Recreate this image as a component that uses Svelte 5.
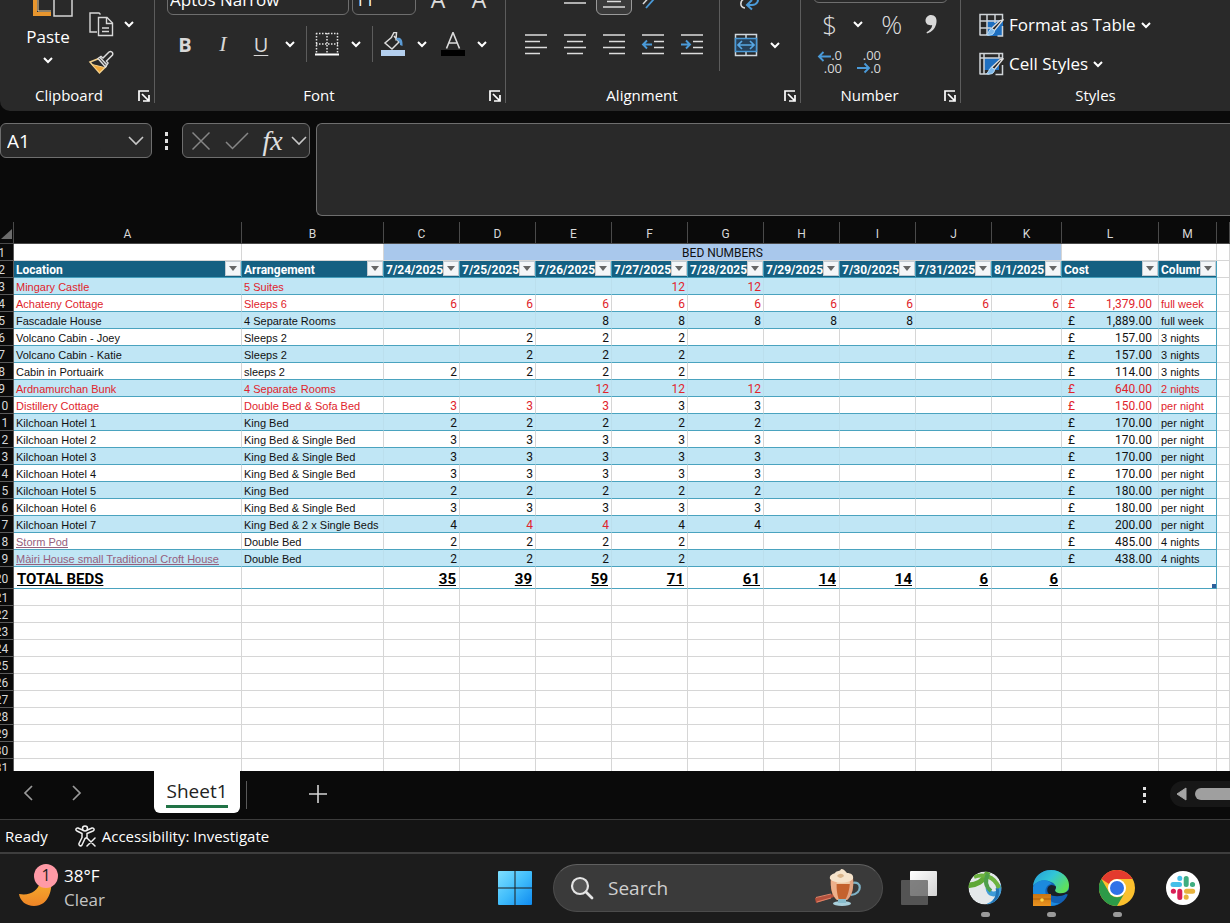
<script>
  const cols = ['A', 'B', 'C', 'D', 'E', 'F', 'G', 'H', 'I', 'J', 'K', 'L', 'M', ''];
  const headers = ['Location', 'Arrangement', '7/24/2025', '7/25/2025', '7/26/2025', '7/27/2025', '7/28/2025', '7/29/2025', '7/30/2025', '7/31/2025', '8/1/2025', 'Cost', 'Column1'];

  // beds: nine nightly values, C to K; reds: positions in beds drawn in red
  const row = (name, arr, beds, cost, per, opt = {}) => ({
    name, arr, cost, per, ...opt,
    beds: Array.from({ length: 9 }, (_, i) => beds[i] ?? ''),
    reds: opt.reds ?? (opt.red ? [0, 1, 2, 3, 4, 5, 6, 7, 8] : [])
  });
  const n = (v, count, skip = 0) => [...Array(skip).fill(''), ...Array(count).fill(v)];

  const rows = [
    row('Mingary Castle', '5 Suites', n(12, 2, 3), '', '', { red: true }),
    row('Achateny Cottage', 'Sleeps 6', n(6, 9), '1,379.00', 'full week', { red: true }),
    row('Fascadale House', '4 Separate Rooms', n(8, 5, 2), '1,889.00', 'full week'),
    row('Volcano Cabin - Joey', 'Sleeps 2', n(2, 3, 1), '157.00', '3 nights'),
    row('Volcano Cabin - Katie', 'Sleeps 2', n(2, 3, 1), '157.00', '3 nights'),
    row('Cabin in Portuairk', 'sleeps 2', n(2, 4), '114.00', '3 nights'),
    row('Ardnamurchan Bunk', '4 Separate Rooms', n(12, 3, 2), '640.00', '2 nights', { red: true }),
    row('Distillery Cottage', 'Double Bed & Sofa Bed', n(3, 5), '150.00', 'per night', { red: true, reds: [0, 1, 2] }),
    row('Kilchoan Hotel 1', 'King Bed', n(2, 5), '170.00', 'per night'),
    row('Kilchoan Hotel 2', 'King Bed & Single Bed', n(3, 5), '170.00', 'per night'),
    row('Kilchoan Hotel 3', 'King Bed & Single Bed', n(3, 5), '170.00', 'per night'),
    row('Kilchoan Hotel 4', 'King Bed & Single Bed', n(3, 5), '170.00', 'per night'),
    row('Kilchoan Hotel 5', 'King Bed', n(2, 5), '180.00', 'per night'),
    row('Kilchoan Hotel 6', 'King Bed & Single Bed', n(3, 5), '180.00', 'per night'),
    row('Kilchoan Hotel 7', 'King Bed & 2 x Single Beds', n(4, 5), '200.00', 'per night', { reds: [1, 2] }),
    row('Storm Pod', 'Double Bed', n(2, 4), '485.00', '4 nights', { link: true }),
    row('Màiri House small Traditional Croft House', 'Double Bed', n(2, 4), '438.00', '4 nights', { link: true })
  ];
  const totals = [35, 39, 59, 71, 61, 14, 14, 6, 6];
  const emptyRows = Array.from({ length: 11 }, (_, i) => i + 21);
</script>

{#snippet chev()}
  <svg width="10" height="8" viewBox="0 0 10 8" aria-hidden="true"><path d="M1 2l4 4 4-4" fill="none" stroke="#fff" stroke-width="2" /></svg>
{/snippet}

{#snippet bigChev()}
  <svg width="16" height="10" viewBox="0 0 16 10" aria-hidden="true"><path d="M1 1l7 7 7-7" fill="none" stroke="#c8c8c8" stroke-width="1.6" /></svg>
{/snippet}

{#snippet launcher(label)}
  <button class="launcher" aria-label={label}>
    <svg width="12" height="12" viewBox="0 0 12 12"><path d="M1 11V1h10M5 11h6V5M4 4l6 6" fill="none" stroke="#fff" stroke-width="1.7" /></svg>
  </button>
{/snippet}

{#snippet lines(d)}
  <svg width="24" height="24" viewBox="0 0 24 24" aria-hidden="true"><path {d} fill="none" stroke="#dcdcdc" stroke-width="1.6" /></svg>
{/snippet}

{#snippet brush()}
  <path d="M25 8l-8.500 10.500-3-2L22 8.500z" fill="#292929" stroke="#e0e0e0" stroke-width="1.300" />
  <path d="M13.500 16.500l3 2c0 4-4 5.500-8 4 2.500-1 2-5 5-6z" fill="#7db8ea" stroke="#b9dcf7" />
{/snippet}

<div class="app">
  <header class="ribbon">
    <section class="group clipboard">
      <div class="body clip-body">
        <button class="paste">
          <svg width="42" height="40" viewBox="0 0 42 40" aria-hidden="true">
            <path d="M3 0v36h16" fill="none" stroke="#e8962e" stroke-width="4" />
            <path d="M6 0v33h13" fill="none" stroke="#f6d9a8" stroke-width="1" />
            <path d="M22 8h18v30H22z" fill="#292929" stroke="#d4d4d4" stroke-width="1.500" />
          </svg>
          <span>Paste</span>
          {@render chev()}
        </button>
        <div class="clip-side">
          <div class="clip-row">
            <button aria-label="Copy">
              <svg width="26" height="26" viewBox="0 0 26 26">
                <path d="M9 21H2V2h9l1.500 1.500" fill="none" stroke="#d8d8d8" stroke-width="1.400" />
                <path d="M10.500 6.500h8.500l5.500 5.500v12.500h-14z" fill="#292929" stroke="#d8d8d8" stroke-width="1.400" />
                <path d="M18.500 6.500v6h6M14 17h7M14 20.500h7" fill="none" stroke="#d8d8d8" stroke-width="1.400" />
              </svg>
            </button>
            <button class="drop" aria-label="Copy options">{@render chev()}</button>
          </div>
          <div class="clip-row">
            <button aria-label="Format Painter">
              <svg width="26" height="26" viewBox="0 0 26 26">
                <path d="M2 12l9-3.500 7 8-6.500 6.500z" fill="#292929" stroke="#f0cf8e" stroke-width="1.500" />
                <path d="M4 14.500l12.500 3-5 5z" fill="#f0a83c" stroke="#f4cf88" />
                <path d="M10 8.500l3-2 2 1.500L21 2c2-1.500 4.500.500 3.500 3l-6 6 1.500 2-2.500 4z" fill="#292929" stroke="#dcdcdc" stroke-width="1.500" />
                <path d="M12 7.500l6.500 7" stroke="#dcdcdc" stroke-width="1.500" />
              </svg>
            </button>
          </div>
        </div>
      </div>
      <footer><span>Clipboard</span>{@render launcher('Clipboard settings')}</footer>
    </section>

    <section class="group font">
      <div class="body two-rows">
        <div class="top-row">
          <input class="font-name" aria-label="Font" value="Aptos Narrow" />
          <input class="font-size" aria-label="Font size" value="11" />
          <button class="grow" aria-label="Increase font size">A</button>
          <button class="grow" aria-label="Decrease font size">A</button>
        </div>
        <div class="tool-row">
          <button class="tool glyph bold">B</button>
          <button class="tool glyph italic">I</button>
          <div class="split">
            <button class="tool glyph underline">U</button>
            <button class="drop" aria-label="Underline options">{@render chev()}</button>
          </div>
          <i class="sep"></i>
          <div class="split">
            <button class="tool" aria-label="Borders">
              <svg width="24" height="24" viewBox="0 0 24 24">
                <path d="M1.500 1v20M22.500 1v20M12 1v20M1 1.500h22M1 12h22" fill="none" stroke="#e4e4e4" stroke-width="1.500" stroke-dasharray="1.500 1.500" />
                <path d="M0 22.500h24" stroke="#fff" stroke-width="2" />
              </svg>
            </button>
            <button class="drop" aria-label="Border options">{@render chev()}</button>
          </div>
          <i class="sep"></i>
          <div class="split">
            <button class="tool" aria-label="Fill color">
              <svg width="24" height="24" viewBox="0 0 24 24">
                <path d="M11 5L4 11l7 6 7-7L13 4M10 6l3-5.500h2.500l-.500 8" fill="none" stroke="#dcdcdc" stroke-width="1.500" />
                <path d="M15.500 6c4-1 6.500 1 6 8l-2.500-1c0-3-1-4-3.500-5z" fill="#5b9bd5" />
                <path d="M0 18h24v6H0z" fill="#b4cfee" />
              </svg>
            </button>
            <button class="drop" aria-label="Fill color options">{@render chev()}</button>
          </div>
          <div class="split font-color">
            <button class="tool" aria-label="Font color">
              <svg width="24" height="24" viewBox="0 0 24 24">
                <path d="M5.500 16.500L12 .500l6.500 16M8 11h8" fill="none" stroke="#dcdcdc" stroke-width="1.600" />
                <path d="M0 18h24v6H0z" fill="#000" />
              </svg>
            </button>
            <button class="drop" aria-label="Font color options">{@render chev()}</button>
          </div>
        </div>
      </div>
      <footer><span>Font</span>{@render launcher('Font settings')}</footer>
    </section>

    <section class="group alignment">
      <div class="body align-body">
        <div class="two-rows">
          <div class="top-row align-top">
            <button class="tool24" aria-label="Middle align">{@render lines('M1 4h22M5 10h14M1 16h22')}</button>
            <button class="boxed" aria-label="Bottom align">{@render lines('M1 8h22M5 14.500h14M1 20h22')}</button>
            <button class="tool24" aria-label="Orientation">
              <svg width="24" height="24" viewBox="0 0 24 24"><path d="M2 17L13 5" stroke="#dcdcdc" stroke-width="1.500" /><path d="M5 21L20 4" stroke="#4a9ad8" stroke-width="1.800" /></svg>
            </button>
          </div>
          <div class="tool-row align-row">
            <button class="tool24" aria-label="Align left">{@render lines('M1 2h22M1 8.500h15M1 14.500h22M1 20.500h15')}</button>
            <button class="tool24" aria-label="Center">{@render lines('M1 2h22M4 8.500h16M1 14.500h22M4 20.500h16')}</button>
            <button class="tool24" aria-label="Align right">{@render lines('M1 2h22M7 8.500h16M1 14.500h22M7 20.500h16')}</button>
            <button class="tool24" aria-label="Decrease indent">
              <svg width="24" height="24" viewBox="0 0 24 24"><path d="M1 2h22M13 8.500h10M13 14.500h10M1 20.500h22" stroke="#dcdcdc" stroke-width="1.600" /><path d="M11 11.500H2M6 7.500l-4 4 4 4" fill="none" stroke="#4a9ad8" stroke-width="1.900" /></svg>
            </button>
            <button class="tool24" aria-label="Increase indent">
              <svg width="24" height="24" viewBox="0 0 24 24"><path d="M1 2h22M13 8.500h10M13 14.500h10M1 20.500h22" stroke="#dcdcdc" stroke-width="1.600" /><path d="M1 11.500h9M6 7.500l4 4-4 4" fill="none" stroke="#4a9ad8" stroke-width="1.900" /></svg>
            </button>
          </div>
        </div>
        <i class="sep tall"></i>
        <div class="two-rows">
          <div class="top-row wrap-row">
            <button class="tool24" aria-label="Wrap text">
              <svg width="24" height="24" viewBox="0 0 24 24"><path d="M9 12c-5 0-6 9 0 9" fill="none" stroke="#dcdcdc" stroke-width="1.600" /><path d="M20 10c4 3 1 8-4 8h-4M16 13l-5 5 5 4.500" fill="none" stroke="#4a9ad8" stroke-width="2" /></svg>
            </button>
          </div>
          <div class="tool-row">
            <div class="split">
              <button class="tool" aria-label="Merge and center">
                <svg width="24" height="24" viewBox="0 0 24 24">
                  <path d="M1.500 1.500h21v21h-21zM12 1v5M12 18v5" fill="none" stroke="#d0d8de" stroke-width="1.500" />
                  <path d="M1.500 5.500h21v13h-21z" fill="#26405a" stroke="#4a9ad8" stroke-width="1.500" />
                  <path d="M4 12h16M8 8l-4 4 4 4M16 8l4 4-4 4" fill="none" stroke="#58a8e4" stroke-width="1.700" />
                </svg>
              </button>
              <button class="drop" aria-label="Merge options">{@render chev()}</button>
            </div>
          </div>
        </div>
      </div>
      <footer><span>Alignment</span>{@render launcher('Alignment settings')}</footer>
    </section>

    <section class="group number">
      <div class="body number-body">
        <select aria-label="Number format"><option></option></select>
        <div class="num-row">
          <button class="sym">$</button>
          <button class="drop" aria-label="Currency options">{@render chev()}</button>
          <button class="sym pct">%</button>
          <button class="sym" aria-label="Comma style">
            <svg width="14" height="22" viewBox="0 0 14 22"><path d="M7 2c4 0 6 3 5.500 7C12 15 8 19 3 20.500l-.500-1.200C6 17.500 8 15 8.200 12 4 13 1.500 10.500 1.500 7.500 1.500 4.500 4 2 7 2z" fill="#d8d8d8" /></svg>
          </button>
        </div>
        <div class="num-row decimals">
          <button class="dec" aria-label="Increase decimal">
            <svg width="26" height="26" viewBox="0 0 26 26"><text x="25" y="10" text-anchor="end">.0</text><text x="25" y="23" text-anchor="end">.00</text><path d="M14 6.500H2M6.500 2L2 6.500 6.500 11" fill="none" stroke="#4a9ad8" stroke-width="1.900" /></svg>
          </button>
          <button class="dec" aria-label="Decrease decimal">
            <svg width="26" height="26" viewBox="0 0 26 26"><text x="25" y="10" text-anchor="end">.00</text><text x="25" y="23" text-anchor="end">.0</text><path d="M1 18h12M8.500 13.500L13 18l-4.500 4.500" fill="none" stroke="#4a9ad8" stroke-width="1.900" /></svg>
          </button>
        </div>
      </div>
      <footer><span>Number</span>{@render launcher('Number settings')}</footer>
    </section>

    <section class="group styles">
      <div class="body styles-body">
        <button class="style-btn">
          <svg width="26" height="26" viewBox="0 0 26 26" aria-hidden="true">
            <path d="M9 8h16v16H9z" fill="#1e6fc0" />
            <path d="M2 23V2.500h22.500V8M2 9h22M2 16h11M9 2v21M17 2v9M1.500 23h10M24.500 14v10h-5" fill="none" stroke="#cfd4d8" stroke-width="1.500" />
            {@render brush()}
          </svg>
          <span>Format as Table</span>{@render chev()}
        </button>
        <button class="style-btn">
          <svg width="26" height="26" viewBox="0 0 26 26" aria-hidden="true">
            <path d="M6 7h15v12H6z" fill="#1e6fc0" />
            <path d="M2 23V2.500h22.500V8M2 7h22M6 2v21M21 2v5M1.500 23h10M24.500 14v9.500h-7" fill="none" stroke="#cfd4d8" stroke-width="1.500" />
            {@render brush()}
          </svg>
          <span>Cell Styles</span>{@render chev()}
        </button>
      </div>
      <footer><span>Styles</span></footer>
    </section>
  </header>

  <div class="formula-bar">
    <div class="name-box">
      <input aria-label="Name box" value="A1" />
      <button aria-label="Name list">{@render bigChev()}</button>
    </div>
    <span class="dots"><i></i><i></i><i></i></span>
    <div class="fx-box">
      <button aria-label="Cancel"><svg width="20" height="20" viewBox="0 0 20 20"><path d="M1.500 1.500l17 17M18.500 1.500l-17 17" stroke="#868686" stroke-width="1.500" /></svg></button>
      <button class="enter" aria-label="Enter"><svg width="24" height="18" viewBox="0 0 24 18"><path d="M1 10l6.500 6.500L23 1" fill="none" stroke="#868686" stroke-width="1.500" /></svg></button>
      <button class="fx" aria-label="Insert function"><em>fx</em></button>
      <button aria-label="Function list">{@render bigChev()}</button>
    </div>
    <textarea aria-label="Formula"></textarea>
  </div>

  <main class="sheet">
    <table>
      <colgroup>
        <col class="c-num" /><col class="c-a" /><col class="c-b" />
        {#each Array(8) as _}<col class="c-day" />{/each}
        <col class="c-k" /><col class="c-l" /><col class="c-m" /><col />
      </colgroup>
      <thead>
        <tr>
          <th class="corner"><svg width="11" height="10" viewBox="0 0 11 10" aria-hidden="true"><path d="M11 0v10H0z" fill="#6c6c6c" /></svg></th>
          {#each cols as c}<th>{c}</th>{/each}
        </tr>
      </thead>
      <tbody>
        <tr>
          <th>1</th><td></td><td></td>
          <td colspan="9" class="banner">BED NUMBERS</td>
          <td></td><td></td><td></td>
        </tr>
        <tr class="fields">
          <th>2</th>
          {#each headers as h}
            <td><div><span>{h}</span><button aria-label={`Filter ${h}`}><svg width="8" height="5" viewBox="0 0 8 5"><path d="M0 0h8L4 5z" fill="#666" /></svg></button></div></td>
          {/each}
          <td class="outside"></td>
        </tr>
        {#each rows as r, i}
          <tr class="rec" class:stripe={i % 2 === 0} class:red={r.red}>
            <th>{i + 3}</th>
            <td>{#if r.link}<a href="#{r.name}">{r.name}</a>{:else}{r.name}{/if}</td>
            <td>{r.arr}</td>
            {#each r.beds as b, j}<td class="num" class:redcell={r.reds.includes(j)} class:black={!r.reds.includes(j)}>{b}</td>{/each}
            <td class="cost">{#if r.cost}<div><span>£</span><span>{r.cost}</span></div>{/if}</td>
            <td class="edge">{r.per}</td>
            <td class="outside"></td>
          </tr>
        {/each}
        <tr class="rec totals">
          <th>20</th>
          <td>TOTAL BEDS</td><td></td>
          {#each totals as t}<td class="num">{t}</td>{/each}
          <td></td><td class="edge grip"></td><td class="outside"></td>
        </tr>
        {#each emptyRows as e}
          <tr><th>{e}</th>{#each cols as _}<td></td>{/each}</tr>
        {/each}
      </tbody>
    </table>
  </main>

  <nav class="tabs">
    <div class="arrows">
      <button aria-label="Previous sheet"><svg width="10" height="16" viewBox="0 0 10 16"><path d="M9 1L2 8l7 7" fill="none" stroke="#9a9a9a" stroke-width="1.700" /></svg></button>
      <button aria-label="Next sheet"><svg width="10" height="16" viewBox="0 0 10 16"><path d="M1 1l7 7-7 7" fill="none" stroke="#9a9a9a" stroke-width="1.700" /></svg></button>
    </div>
    <button class="tab"><span>Sheet1</span></button>
    <i class="tab-sep"></i>
    <button class="add" aria-label="New sheet"><svg width="18" height="18" viewBox="0 0 18 18"><path d="M9 0v18M0 9h18" stroke="#d4d4d4" stroke-width="1.600" /></svg></button>
    <span class="dots tab-dots"><i></i><i></i><i></i></span>
    <div class="scroll">
      <svg width="11" height="14" viewBox="0 0 11 14" aria-hidden="true"><path d="M10 1v12L1 7z" fill="#a4a4a4" stroke="#a4a4a4" stroke-linejoin="round" /></svg>
      <span></span>
    </div>
  </nav>

  <div class="status">
    <span>Ready</span>
    <button>
      <svg width="22" height="22" viewBox="0 0 22 22" aria-hidden="true">
        <g fill="none" stroke="#f0f0f0" stroke-width="1.500" stroke-linejoin="round" stroke-linecap="round">
          <circle cx="10" cy="3.500" r="2.500" />
          <path d="M7.500 5L3 3C1 2.500 0 5 2 6l5 2.500v4l-3 6c-.500 2.500 2 3 3 1.500l3-6.500 2-1V8.500L18 6c2-1 1-3.500-1-3l-4.500 2M12 13l8 8M20 13l-8 8" />
        </g>
      </svg>
      Accessibility: Investigate
    </button>
  </div>

  <footer class="taskbar">
    <button class="weather">
      <svg width="40" height="46" viewBox="0 0 40 46" aria-hidden="true">
        <defs><linearGradient id="moon" x1="0" y1="0" x2="0" y2="1"><stop offset="0" stop-color="#f7b52f" /><stop offset="1" stop-color="#ee8426" /></linearGradient></defs>
        <path d="M33 14c2 12-2 29-17 29C8 43 2 38 1 31c11 2 19-3 21-12z" fill="url(#moon)" />
        <circle cx="28" cy="13" r="12" fill="#ff9aa6" />
        <text x="28" y="18" text-anchor="middle">1</text>
      </svg>
      <span><b>38°F</b><small>Clear</small></span>
    </button>
    <div class="apps">
      <button aria-label="Start">
        <svg width="36" height="36" viewBox="0 0 36 36">
          <defs><linearGradient id="win" x1="0" y1="0" x2="1" y2="1"><stop offset="0" stop-color="#7fe0ff" /><stop offset=".5" stop-color="#41bdfb" /><stop offset="1" stop-color="#0f8bf0" /></linearGradient></defs>
          <path d="M1 2q0-1 1-1h15.500v16.500H1zM18.500 1H34q1 0 1 1v15.500H18.500zM1 18.500h16.500V35H2q-1 0-1-1zM18.500 18.500H35V34q0 1-1 1H18.500z" fill="url(#win)" />
        </svg>
      </button>
      <label class="search">
        <svg width="24" height="24" viewBox="0 0 24 24" aria-hidden="true"><circle cx="10" cy="10" r="8" fill="#555" stroke="#e4e4e4" stroke-width="2.200" /><path d="M16 16l6 6" stroke="#e4e4e4" stroke-width="2.800" stroke-linecap="round" /></svg>
        <input placeholder="Search" aria-label="Search" />
        <svg width="48" height="38" viewBox="0 0 48 38" aria-hidden="true">
          <path d="M1 29l18-4 1 3-18 6z" fill="#b5503c" /><path d="M2 28.500l15-3.500M3 33l14-4" stroke="#e08468" stroke-width="1.200" />
          <path d="M38 14c10-3 11 11-1 12" fill="none" stroke="#7fb2c6" stroke-width="2.200" />
          <path d="M17 9h22c1 10-1 18-6 22h-10c-5-4-7-12-6-22z" fill="#c4622e" />
          <path d="M17 9h22v6H17z" fill="#eec9a6" />
          <path d="M17 9h6c-1 10 0 16 2 22h-2c-5-4-7-12-6-22z" fill="#edb08b" />
          <path d="M36 9h3c1 10-1 18-6 22h-2c4-6 5-14 5-22z" fill="#e2a483" />
          <path d="M16 10c-1-4 3-5 5-6 2-3 5-1 6-4 3 0 4 2 6 4 4 0 7 2 6 6-5 5-18 5-23 0z" fill="#f5e3cb" />
          <path d="M23 7c2-3 6-3 7 0-2 2-4 3-7 0z" fill="#d9b48a" />
          <ellipse cx="28" cy="34.500" rx="9" ry="2.500" fill="#a9cfdb" /><path d="M24 30h8v4h-8z" fill="#88bccc" />
        </svg>
      </label>
      <button class="task-view" aria-label="Task view">
        <svg width="36" height="36" viewBox="0 0 36 36"><defs><linearGradient id="tv" x1="0" y1="0" x2="1" y2="1"><stop offset="0" stop-color="#fff" /><stop offset="1" stop-color="#d2d2d2" /></linearGradient></defs><rect x="9" y="1" width="27" height="25" rx="1" fill="url(#tv)" /><rect x="0" y="10" width="27" height="25" rx="1" fill="#636363" opacity=".8" /></svg>
      </button>
      <button class="run" aria-label="Webex">
        <svg width="36" height="36" viewBox="0 0 36 36">
          <defs><clipPath id="orb"><circle cx="18" cy="18" r="16.500" /></clipPath></defs>
          <g clip-path="url(#orb)" fill="none">
            <circle cx="18" cy="18" r="16.500" fill="#e4e8ea" />
            <path d="M21 18c1 7 7 8 14 2M31 15c4 9-1 17-10 21" stroke="#3d9bd8" stroke-width="5" />
            <path d="M30 18c2 7-1 12-6 17" stroke="#2273b4" stroke-width="3" />
            <path d="M0 15c9 1 17-4 21-13" stroke="#5fa836" stroke-width="5.500" />
            <path d="M7 7c8-3 20-2 25 11" stroke="#6db33f" stroke-width="4" />
            <path d="M21 4c-4 8-2 13 3 17" stroke="#4e9f4a" stroke-width="4" />
          </g>
        </svg><i></i>
      </button>
      <button class="run" aria-label="Edge">
        <svg width="36" height="36" viewBox="0 0 36 36">
          <defs>
            <linearGradient id="edge" x1="0" y1="0" x2="1" y2=".6"><stop offset="0" stop-color="#259ad8" /><stop offset=".5" stop-color="#32c5d8" /><stop offset="1" stop-color="#5fe05a" /></linearGradient>
            <linearGradient id="bag" x1="0" y1="0" x2="0" y2="1"><stop offset="0" stop-color="#c87412" /><stop offset="1" stop-color="#eb9420" /></linearGradient>
          </defs>
          <circle cx="18" cy="18" r="18" fill="#1260b4" />
          <path d="M0 16C1 6 9 0 18 0c10 0 18 7 18 15 0 6-4 9-9 9-4 0-6-2-5-4 2-2 1-6-4-8C11 9 4 11 0 16z" fill="url(#edge)" />
          <path d="M0 17c4-8 15-9 19-3-5 0-8 5-6 11 2 6 8 9 14 8-9 6-25 3-27-10z" fill="#1c8ade" />
          <path d="M18 15c-4 1-5 6-2 9 4 3 12 3 17 0l3 1 .500-6c-3 5-10.500 5-13.500 3-2-2 0-3 0-5 0-1-2-2-5-2z" fill="#1a2027" />
          <rect x="0" y="24" width="18" height="12" fill="url(#bag)" /><path d="M0 29h18" stroke="#a85c08" /><circle cx="9" cy="30" r="1.800" fill="#ffd84a" />
        </svg><i></i>
      </button>
      <button class="run" aria-label="Chrome">
        <svg width="36" height="36" viewBox="0 0 36 36">
          <circle cx="18" cy="18" r="18" fill="#fbc02d" />
          <path d="M2.400 9A18 18 0 0 1 33.600 9H18a9 9 0 0 0-8 5z" fill="#e33b2e" />
          <path d="M2.400 9A18 18 0 0 0 18 36l8-13.500a9 9 0 0 1-15.800 0z" fill="#2c9a48" />
          <circle cx="18" cy="18" r="9" fill="#fff" /><circle cx="18" cy="18" r="7" fill="#2f72e8" />
        </svg><i></i>
      </button>
      <button class="run" aria-label="Slack">
        <svg width="36" height="36" viewBox="0 0 36 36">
          <circle cx="18" cy="18" r="17" fill="#fff" />
          <g fill="none" stroke-width="5" stroke-linecap="round">
            <path d="M8 14.500h6.500M14.800 8.300v.2" stroke="#45bfe8" /><path d="M21.200 8.500v6M27.600 14.500h-.2" stroke="#3fae80" />
            <path d="M21.500 21.200h6.200M21.200 27.300v-.2" stroke="#e8b33c" /><path d="M14.800 21.200v6.300M8.300 21.200h.2" stroke="#d81f56" />
          </g>
        </svg>
      </button>
    </div>
  </footer>
</div>

<style>
  :global(body) { background: #0a0a0a; }
  .app { display: flex; flex-direction: column; height: 100vh; overflow: hidden; font-family: "Open Sans", "Noto Sans", sans-serif; color: #fff; }
  button { display: flex; align-items: center; justify-content: center; padding: 0; border: 0; background: none; color: inherit; font: inherit; }
  input, textarea, select { box-sizing: border-box; border: 1px solid #6e6e6e; border-radius: 6px; background: #292929; color: #fff; font: inherit; outline: 0; }
  svg { flex: none; display: block; }

  .ribbon { flex: none; display: flex; align-items: flex-end; box-sizing: border-box; height: 111px; padding-bottom: 8px; background: #292929; border-bottom-left-radius: 10px; overflow: hidden; }
  .group { display: flex; flex-direction: column; justify-content: flex-end; box-sizing: border-box; height: 150px; border-right: 1px solid #5c5c5c; }
  .group footer { display: flex; align-items: center; height: 16px; font-size: 15px; line-height: 16px; }
  .group footer span { flex: 1; text-align: center; }
  .launcher { width: 22px; padding: 2px 0 0 2px; }
  .clipboard { width: 155px; }
  .clipboard footer { padding-left: 6px; }
  .font { width: 351px; }
  .alignment { width: 295px; }
  .number { width: 160px; }
  .styles { flex: 1; border-right: 0; }

  .clip-body { display: flex; align-items: flex-end; padding: 0 0 5px 18px; }
  .paste { flex-direction: column; width: 60px; padding-bottom: 18px; font-size: 17px; }
  .paste span { line-height: 24px; margin: 7px 0 7px; }
  .paste svg:first-child { margin-left: 10px; }
  .clip-side { display: flex; flex-direction: column; padding-left: 10px; }
  .clip-row { display: flex; align-items: center; height: 39px; }
  .clip-row .drop { width: 30px; }
  .drop { width: 22px; height: 28px; }

  .two-rows { display: flex; flex-direction: column; gap: 12px; }
  .font .two-rows { gap: 11px; padding: 0 0 25px 12px; }
  .top-row { display: flex; align-items: center; gap: 3px; height: 32px; }
  .font-name { width: 182px; height: 32px; font-size: 17px; padding: 0 0 0 2px; }
  .font-size { width: 64px; height: 32px; font-size: 17px; }
  .grow { width: 38px; font-size: 23px; color: #dcdcdc; }
  .tool-row { display: flex; align-items: center; height: 36px; }
  .font .tool-row { padding-left: 4px; }
  .tool { width: 28px; height: 28px; }
  .glyph { margin-right: 10px; color: #d8d8d8; font-size: 20px; }
  .split .glyph { margin-right: 0; }
  .bold { font-weight: 700; }
  .italic { font-style: italic; font-family: "Liberation Serif", serif; font-size: 22px; }
  .underline { text-decoration: underline; text-underline-offset: 3px; text-decoration-thickness: 1px; }
  .split { display: flex; gap: 4px; }
  .sep { width: 1px; height: 36px; margin: 0 6px 0 5px; background: #5c5c5c; }
  .font-color { margin-left: 6px; }

  .align-body { display: flex; align-items: flex-end; padding-left: 18px; }
  .align-body .two-rows { padding-bottom: 24px; }
  .align-row { gap: 15px; }
  .align-top { padding-left: 39px; gap: 9px; }
  .tool24 { width: 24px; height: 24px; }
  .boxed { box-sizing: border-box; width: 36px; height: 32px; border: 1px solid #9a9a9a; border-radius: 6px; background: #3a3a3a; }
  .sep.tall { height: 90px; margin: 0 12px 16px 15px; }
  .wrap-row { padding-left: 4px; }

  .number-body { display: flex; flex-direction: column; padding: 0 12px 10px; }
  .number-body select { height: 32px; appearance: none; }
  .num-row { display: flex; align-items: center; height: 28px; margin-top: 7px; }
  .num-row .drop { width: 24px; }
  .decimals { gap: 13px; padding-left: 4px; margin-top: 11px; }
  .sym { width: 34px; font-size: 26px; font-weight: 300; color: #dcdcdc; }
  .pct { margin: 0 6px 0 5px; }
  .dec { width: 26px; }
  .dec text { font: 13px "Open Sans", sans-serif; fill: #d8d8d8; }

  .styles-body { padding: 0 0 4px 17px; }
  .style-btn { height: 39px; font-size: 17px; gap: 5px; }

  .formula-bar { flex: none; display: flex; align-items: flex-start; padding: 12px 0 6px; background: #0a0a0a; }
  .name-box, .fx-box { display: flex; align-items: center; box-sizing: border-box; height: 35px; border: 1px solid #6e6e6e; border-radius: 6px; background: #292929; }
  .name-box { width: 152px; padding-right: 7px; justify-content: space-between; }
  .name-box input { width: 100px; border: 0; padding: 0 6px; font-size: 19px; }
  .dots { display: flex; flex-direction: column; gap: 3px; width: 4px; padding: 9px 13px; }
  .dots i { width: 3px; height: 4px; background: #e0e0e0; }
  .fx-box { width: 128px; padding: 0 2px 0 8px; justify-content: space-between; }
  .enter { margin-left: 6px; }
  .fx { margin-left: 5px; color: #e0e0e0; font: italic 28px/30px "Liberation Serif", serif; }
  textarea { flex: 1; height: 93px; margin-left: 6px; border-right: 0; border-radius: 6px 0 0 6px; resize: none; }

  .sheet { flex: 1; min-height: 0; overflow: hidden; background: #fff; }
  table { width: calc(100% + 10px); margin-left: -10px; table-layout: fixed; border-collapse: separate; border-spacing: 0; font: 11px/14px "Liberation Sans", Arial, sans-serif; color: #111; }
  .c-num { width: 24px; } .c-a { width: 228px; } .c-b { width: 142px; } .c-day { width: 76px; }
  .c-k { width: 70px; } .c-l { width: 97px; } .c-m { width: 58px; }
  td, th { box-sizing: border-box; height: 17px; padding: 2px 2px 0; border: solid #d6d6d6; border-width: 0 1px 1px 0; overflow: hidden; white-space: nowrap; }
  th { background: #0a0a0a; color: #d8d8d8; font: 12px/14px Roboto, sans-serif; border-color: #5a5a5a; text-align: center; }
  thead th { height: 22px; border-color: #4a4a4a; }
  .corner svg { margin-left: 9px; }
  .banner { background: #a9c8ec; text-align: center; }
  .fields td { padding: 0 0 0 2px; background: #156082; color: #fff; font: 700 12px/14px Roboto, sans-serif; border-color: #45a0bd; }
  .fields div { display: flex; height: 16px; }
  .fields span { flex: 1; min-width: 0; padding-top: 2px; overflow: hidden; }
  .fields button { flex: none; width: 16px; height: 15px; background: #f4f6f8; border: 1px solid #c3cbd2; box-sizing: border-box; }
  .rec td { border-bottom-color: #4aa3bf; }
  .stripe td { background: #c0e6f5; border-right-color: #bbdfed; }
  .red td { color: #e0242c; }
  .red .black { color: #111; }
  td.redcell { color: #e0242c; }
  .banner, .num, .cost { font: 12px/14px Roboto, sans-serif; }
  .num { text-align: right; }
  .cost div { display: flex; justify-content: space-between; padding: 0 4px; }
  .rec .edge { border-right-color: #4aa3bf; }
  a { color: #96607d; text-decoration: underline; }
  td.outside, .rec td.outside, .fields td.outside { background: #fff; border-color: #d6d6d6; }
  .totals td { height: 22px; padding: 2px 3px 0; font: 700 15px/18px Roboto, sans-serif; text-decoration: underline; color: #000; }
  .totals .grip { background: linear-gradient(#2f5f9a, #2f5f9a) right bottom / 4px 4px no-repeat; }

  .tabs { flex: none; display: flex; box-sizing: border-box; height: 49px; background: #0a0a0a; border-bottom: 1px solid #3c3c3c; }
  .arrows { display: flex; gap: 39px; padding: 0 72px 4px 23px; }
  .tab { box-sizing: border-box; width: 86px; height: 42px; border-radius: 0 0 6px 6px; background: #fff; color: #222; font-size: 19px; }
  .tab span { line-height: 28px; border-bottom: 3px solid #217346; }
  .tab-sep { width: 1px; height: 28px; margin: 10px 0 0 6px; background: #5a5a5a; }
  .add { width: 18px; margin: 0 auto 3px 62px; }
  .tab-dots { padding: 16px 23px; }
  .scroll { display: flex; align-items: center; gap: 8px; width: 60px; height: 26px; margin-top: 10px; padding-left: 6px; box-sizing: border-box; border-radius: 13px 0 0 13px; background: #171717; }
  .scroll span { flex: 1; height: 12px; border-radius: 6px 0 0 6px; background: #9f9f9f; }

  .status { flex: none; display: flex; align-items: center; gap: 27px; box-sizing: border-box; height: 34px; padding: 0 5px; background: #141414; border-bottom: 2px solid #3e3e3e; font-size: 15px; }
  .status button { gap: 5px; }

  .taskbar { flex: none; display: flex; justify-content: space-between; box-sizing: border-box; height: 69px; padding: 0 29px 0 18px; background: #1c1c1c; }
  .weather { align-self: flex-start; gap: 6px; padding-top: 5px; text-align: left; }
  .weather text { font: 16px "Open Sans", sans-serif; fill: #222; }
  .weather span { display: flex; flex-direction: column; padding-top: 5px; }
  .weather b, .weather small { font-size: 17px; font-weight: 400; line-height: 24px; }
  .weather small { color: #c4c4c4; }
  .apps { display: flex; align-items: center; gap: 30px; padding-bottom: 1px; }
  .apps button { position: relative; }
  .search { display: flex; align-items: center; box-sizing: border-box; width: 330px; height: 48px; margin-left: -10px; padding: 0 20px 0 16px; border: 1px solid #4c4c4c; border-top-color: #606060; border-radius: 24px; background: #3a3a3a; }
  .search input { flex: 1; min-width: 0; border: 0; padding: 0 14px; background: none; font-size: 19px; }
  .search input::placeholder { color: #cfcfcf; opacity: 1; }
  .task-view { margin: 0 0 0 -12px; }
  .run i { position: absolute; left: 14px; top: 42px; width: 9px; height: 5px; border-radius: 3px; background: #9a9a9a; }
</style>
